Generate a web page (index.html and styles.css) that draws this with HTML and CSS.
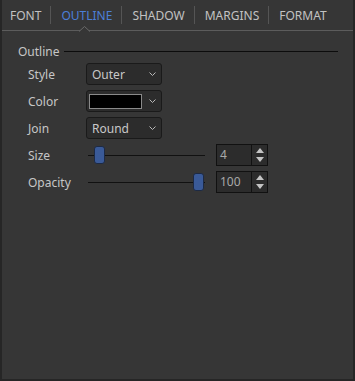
FILE: index.html
```html
<!DOCTYPE html>
<html lang="en">

<head>
    <meta charset="UTF-8">
    <title>Outline</title>
    <link rel="stylesheet" href="styles.css">
</head>

<body>
    <div class="panel">
        <!-- tabs -->
        <div class="tabs">
            <span class="tab">FONT</span>
            <span class="sep"></span>
            <span class="tab active">OUTLINE
                <svg class="caret" width="11" height="6" viewBox="0 0 11 6">
                    <path d="M0 5.5 L5.5 0.5 L11 5.5" fill="#363636" stroke="#6a6a6a" stroke-width="1"/>
                </svg>
            </span>
            <span class="sep"></span>
            <span class="tab">SHADOW</span>
            <span class="sep"></span>
            <span class="tab">MARGINS</span>
            <span class="sep"></span>
            <span class="tab">FORMAT</span>
        </div>

        <div class="group">
            <div class="group-title">
                <span>Outline</span>
                <span class="rule"></span>
            </div>

            <div class="rows">
                <label>Style</label>
                <div class="select">
                    <span>Outer</span>
                    <svg class="chev" width="7" height="4" viewBox="0 0 7 4"><path d="M0.5 0.5 L3.5 3.5 L6.5 0.5" fill="none" stroke="#b8b8b8"/></svg>
                </div>

                <label>Color</label>
                <div class="select">
                    <span class="swatch"></span>
                    <svg class="chev" width="7" height="4" viewBox="0 0 7 4"><path d="M0.5 0.5 L3.5 3.5 L6.5 0.5" fill="none" stroke="#b8b8b8"/></svg>
                </div>

                <label>Join</label>
                <div class="select">
                    <span>Round</span>
                    <svg class="chev" width="7" height="4" viewBox="0 0 7 4"><path d="M0.5 0.5 L3.5 3.5 L6.5 0.5" fill="none" stroke="#b8b8b8"/></svg>
                </div>

                <label>Size</label>
                <div class="slide-row">
                    <div class="slider">
                        <span class="track"></span>
                        <span class="thumb" style="left: 6px;"></span>
                    </div>
                    <div class="spin">
                        <span class="val">4</span>
                        <span class="arrows">
                            <svg width="8" height="5" viewBox="0 0 8 5"><path d="M0 5 L4 0 L8 5 Z" fill="#c4c4c4"/></svg>
                            <svg width="8" height="5" viewBox="0 0 8 5"><path d="M0 0 L4 5 L8 0 Z" fill="#c4c4c4"/></svg>
                        </span>
                    </div>
                </div>

                <label>Opacity</label>
                <div class="slide-row">
                    <div class="slider">
                        <span class="track"></span>
                        <span class="thumb" style="left: 105px;"></span>
                    </div>
                    <div class="spin">
                        <span class="val">100</span>
                        <span class="arrows">
                            <svg width="8" height="5" viewBox="0 0 8 5"><path d="M0 5 L4 0 L8 5 Z" fill="#c4c4c4"/></svg>
                            <svg width="8" height="5" viewBox="0 0 8 5"><path d="M0 0 L4 5 L8 0 Z" fill="#c4c4c4"/></svg>
                        </span>
                    </div>
                </div>
            </div>
        </div>
    </div>
</body>

</html>
```

FILE: styles.css
```css
html,
body {
    margin: 0;
    height: 100%;
}

body {
    font-family: 'Noto Sans', 'Open Sans', sans-serif;
    font-size: 12px;
    background-color: #353535;
    color: #c6c6c6;
}

.panel {
    box-sizing: border-box;
    height: 381px;
    width: 355px;
    border: 2px solid #262626;
    border-top: none;
    background-color: #363636;
}

/* tab strip */
.tabs {
    display: flex;
    align-items: center;
    height: 30px;
    padding-left: 6px;
    border-bottom: 1px solid #5c5c5c;
}

.tab {
    position: relative;
    padding: 0 9px 0 2px;
    margin-left: 8px;
    color: #c2c2c2;
    line-height: 31px;
}

.tab:first-child {
    margin-left: 0;
}

.tab.active {
    color: #4c7fd6;
}

.caret {
    position: absolute;
    left: 20px;
    bottom: -1px;
    display: block;
}

.sep {
    width: 1px;
    height: 18px;
    background-color: #555;
}

/* group */
.group {
    padding: 12px 15px 0 16px;
}

.group-title {
    display: flex;
    align-items: center;
    height: 16px;
}

.rule {
    flex: 1;
    height: 1px;
    margin-left: 4px;
    background-color: #0c0c0c;
}

.rows {
    display: grid;
    grid-template-columns: 58px 1fr;
    grid-auto-rows: 22px;
    row-gap: 5px;
    align-items: center;
    padding: 4px 0 0 10px;
}

.select {
    box-sizing: border-box;
    display: flex;
    align-items: center;
    justify-content: space-between;
    width: 76px;
    height: 22px;
    padding: 0 5px 0 5px;
    border: 1px solid #1a1a1a;
    border-radius: 3px;
    background-color: #2c2c2c;
    color: #c8c8c8;
}

.swatch {
    box-sizing: border-box;
    width: 53px;
    height: 15px;
    margin-left: -3px;
    border: 1px solid #8a8a8a;
    background-color: #000;
}

.slide-row {
    display: flex;
    align-items: center;
}

.slider {
    position: relative;
    width: 117px;
    height: 22px;
    margin-left: 2px;
}

.track {
    position: absolute;
    left: 0;
    right: 0;
    top: 11px;
    height: 1px;
    background-color: #111;
}

.thumb {
    position: absolute;
    top: 2px;
    box-sizing: border-box;
    width: 11px;
    height: 18px;
    border: 1px solid #1d2a44;
    border-radius: 3px;
    background-color: #3a5a98;
}

.spin {
    box-sizing: border-box;
    display: flex;
    width: 52px;
    height: 22px;
    margin-left: 11px;
    border: 1px solid #111;
    background-color: #2c2c2c;
}

.val {
    flex: 1;
    padding-left: 3px;
    line-height: 20px;
    color: #a8a8a8;
}

.arrows {
    display: flex;
    flex-direction: column;
    justify-content: space-evenly;
    align-items: center;
    width: 15px;
    border-left: 1px solid #111;
}

.arrows svg {
    display: block;
}
```
